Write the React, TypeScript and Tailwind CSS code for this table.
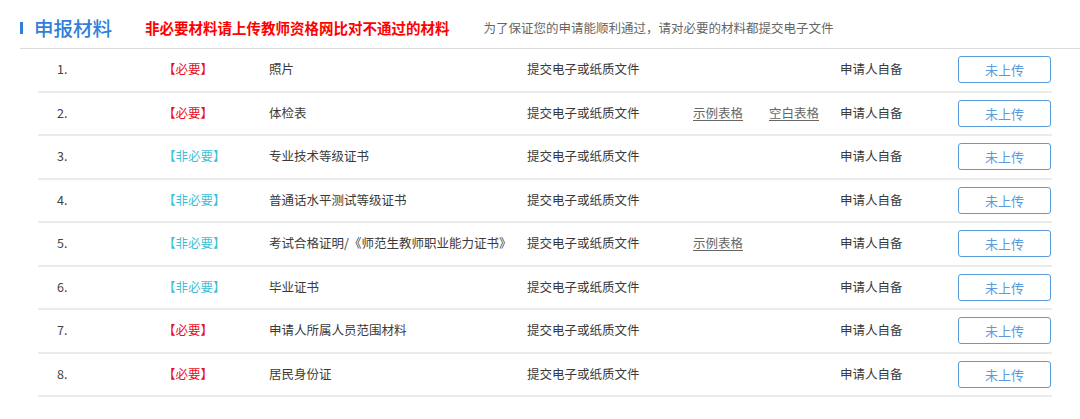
const rows = [
  { no: "1.", must: true, name: "照片", example: false, blank: false },
  { no: "2.", must: true, name: "体检表", example: true, blank: true },
  { no: "3.", must: false, name: "专业技术等级证书", example: false, blank: false },
  { no: "4.", must: false, name: "普通话水平测试等级证书", example: false, blank: false },
  { no: "5.", must: false, name: "考试合格证明/《师范生教师职业能力证书》", example: true, blank: false },
  { no: "6.", must: false, name: "毕业证书", example: false, blank: false },
  { no: "7.", must: true, name: "申请人所属人员范围材料", example: false, blank: false },
  { no: "8.", must: true, name: "居民身份证", example: false, blank: false },
];

export default function App() {
  return (
    <div
      className="w-[1080px] h-[419px] bg-white overflow-hidden"
      style={{ fontFamily: '"Noto Sans CJK SC", "Microsoft YaHei", sans-serif' }}
    >
      <div className="ml-[20px] h-[49px] pt-[8px] flex items-center border-b border-[#dcdcdc]">
        <span className="w-[3px] h-[12px] bg-[#2f7fd8]" />
        <span className="ml-[11px] text-[19.5px] leading-none text-[#2f7fd8] font-medium">申报材料</span>
        <span className="ml-[33px] text-[14.5px] leading-none font-bold text-[#ff0000]">
          非必要材料请上传教师资格网比对不通过的材料
        </span>
        <span className="ml-[34px] text-[12.5px] leading-none text-[#666]">
          为了保证您的申请能顺利通过，请对必要的材料都提交电子文件
        </span>
      </div>

      <div className="ml-[38px] w-[1014px]">
        {rows.map((r) => (
          <div
            key={r.no}
            className="h-[43.5px] flex items-center border-b-2 border-[#ebebeb] text-[12.5px] text-[#3a3a3a]"
          >
            <span className="pl-[19px] w-[125px] text-[#444]">{r.no}</span>
            <span className={`w-[106px] ${r.must ? "text-[#e8101e]" : "text-[#3fbfd6]"}`}>
              {r.must ? "【必要】" : "【非必要】"}
            </span>
            <span className="w-[258px]">{r.name}</span>
            <span className="w-[166px]">提交电子或纸质文件</span>
            <span className="w-[76px] text-[#666] underline underline-offset-2">
              {r.example ? "示例表格" : ""}
            </span>
            <span className="w-[71px] text-[#666] underline underline-offset-2">
              {r.blank ? "空白表格" : ""}
            </span>
            <span className="w-[118px]">申请人自备</span>
            <button className="w-[93px] h-[27px] rounded-[3px] border border-[#5a9bdc] text-[#5a9bdc] text-[13px] bg-white">
              未上传
            </button>
          </div>
        ))}
      </div>
    </div>
  );
}
